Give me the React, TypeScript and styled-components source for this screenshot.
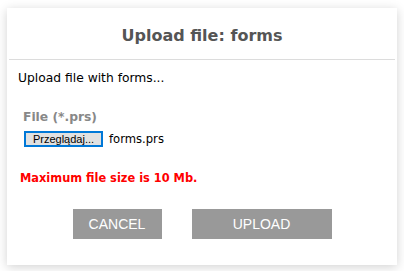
import React from 'react';
import styled, { createGlobalStyle } from 'styled-components';

const GlobalStyle = createGlobalStyle`
  html, body {
    margin: 0;
    padding: 0;
    background: #ffffff;
  }
  * {
    box-sizing: border-box;
  }
`;

const App = () => {
  return (
    <>
      <GlobalStyle />
      <Page>
        <Dialog>
          <Header>
            <Title>Upload file: forms</Title>
          </Header>
          <Body>
            <Intro>Upload file with forms...</Intro>
            <Field>
              <FieldLabel>File (*.prs)</FieldLabel>
              <FileRow>
                <BrowseButton type='button'>Przeglądaj...</BrowseButton>
                <FileName>forms.prs</FileName>
              </FileRow>
            </Field>
            <Warning>Maximum file size is 10 Mb.</Warning>
            <Actions>
              <ActionButton type='button' $width={89}>
                CANCEL
              </ActionButton>
              <ActionButton type='button' $width={140}>
                UPLOAD
              </ActionButton>
            </Actions>
          </Body>
        </Dialog>
      </Page>
    </>
  );
};

const Page = styled.div`
  padding: 8px 7px 6px;
  width: 404px;
  height: 271px;
`;

const Dialog = styled.div`
  background: #ffffff;
  box-shadow: 0 2px 10px rgba(0, 0, 0, 0.18);
  height: 257px;
  width: 390px;
`;

const Header = styled.div`
  border-bottom: 1px solid #dcdcdc;
  margin: 0 2px;
  padding: 18px 0 14px;
  text-align: center;
`;

const Title = styled.h1`
  color: #555555;
  font-family: 'DejaVu Sans', Verdana, sans-serif;
  font-size: 16px;
  font-weight: bold;
  line-height: 19px;
  margin: 0;
`;

const Body = styled.div`
  display: flex;
  flex-direction: column;
  padding: 11px 11px 0;
`;

const Intro = styled.p`
  color: #000000;
  font-family: 'DejaVu Sans', Verdana, sans-serif;
  font-size: 12.3px;
  line-height: 15px;
  margin: 0;
`;

const Field = styled.div`
  display: flex;
  flex-direction: column;
  gap: 6px;
  margin-top: 24px;
  padding-left: 5px;
`;

const FieldLabel = styled.label`
  color: #888888;
  font-family: 'DejaVu Sans', Verdana, sans-serif;
  font-size: 12.3px;
  font-weight: bold;
  line-height: 15px;
`;

const FileRow = styled.div`
  align-items: center;
  display: flex;
  gap: 6px;
  height: 16px;
  padding-left: 1px;
`;

const BrowseButton = styled.button`
  background: #e1e1e1;
  border: 2px solid #0078d7;
  color: #000000;
  font-family: 'Liberation Sans', Arial, sans-serif;
  font-size: 11px;
  height: 16px;
  line-height: 12px;
  padding: 0;
  white-space: nowrap;
  width: 79px;
`;

const FileName = styled.span`
  color: #000000;
  font-family: 'DejaVu Sans', Verdana, sans-serif;
  font-size: 11.6px;
`;

const Warning = styled.p`
  color: #ff0000;
  font-family: 'DejaVu Sans', Verdana, sans-serif;
  font-size: 11.4px;
  font-weight: bold;
  line-height: 14px;
  margin: 24px 0 0 2px;
`;

const Actions = styled.div`
  display: flex;
  gap: 30px;
  justify-content: center;
  margin-top: 24px;
`;

const ActionButton = styled.button<{ $width: number }>`
  background: #999999;
  border: none;
  color: #ffffff;
  font-family: 'Liberation Sans', Arial, sans-serif;
  font-size: 14px;
  height: 30px;
  padding: 0;
  width: ${(p) => p.$width}px;
`;

export default App;
